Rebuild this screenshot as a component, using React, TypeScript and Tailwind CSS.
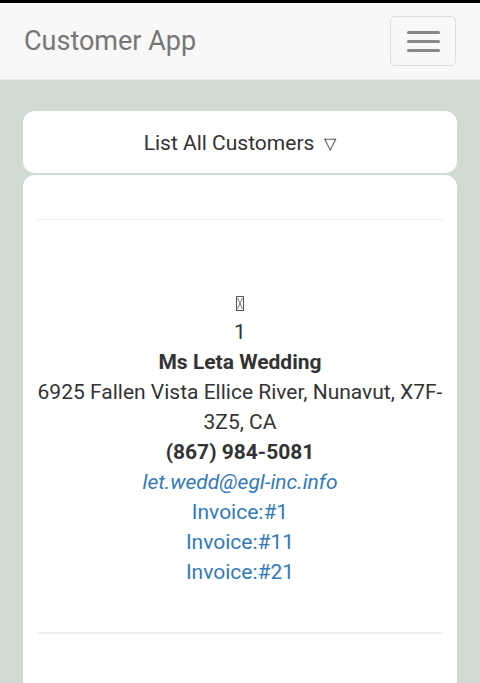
import React from "react";

const App: React.FC = () => {
  return (
    <div
      className="min-h-[683px] bg-[#d0dbd2] border-t-[3px] border-black"
      style={{ fontFamily: "Roboto, 'Liberation Sans', sans-serif" }}
    >
      {/* Navbar */}
      <nav className="h-[77px] bg-[#f8f8f8] border-b border-[#e7e7e7] flex items-center justify-between pl-[24px] pr-[24px]">
        <span className="text-[27px] text-[#777] leading-none">Customer App</span>
        <button className="w-[66px] h-[50px] border border-[#ddd] rounded-[5px] flex flex-col items-center justify-center gap-[6px]">
          <span className="block w-[33px] h-[3px] bg-[#888] rounded-sm" />
          <span className="block w-[33px] h-[3px] bg-[#888] rounded-sm" />
          <span className="block w-[33px] h-[3px] bg-[#888] rounded-sm" />
        </button>
      </nav>

      <div className="px-[23px] pt-[31px] flex flex-col gap-[2px]">
        {/* Dropdown card */}
        <div className="bg-white rounded-[12px] h-[62px] pt-[4px] flex items-center justify-center text-[21px] text-[#333]">
          List All Customers <span className="ml-[10px] text-[16px]">▽</span>
        </div>

        {/* Customer card */}
        <div className="bg-white rounded-t-[12px] px-[14px] pt-[44px] pb-[60px]">
          <hr className="border-t border-[#eee]" />
          <div className="pt-[67px] pb-[45px] text-center text-[21px] leading-[30px] text-[#333]">
            <div className="flex justify-center items-center h-[30px] pt-[2px]">
              <svg width="8" height="15" viewBox="0 0 8 15" className="text-[#555]">
                <rect x="0.5" y="0.5" width="7" height="14" fill="none" stroke="currentColor" strokeWidth="1" />
                <path d="M1.5 2 L6.5 13 M6.5 2 L1.5 13" stroke="currentColor" strokeWidth="0.8" />
              </svg>
            </div>
            <div>1</div>
            <div className="font-bold">Ms Leta Wedding</div>
            <div>6925 Fallen Vista Ellice River, Nunavut, X7F-3Z5, CA</div>
            <div className="font-bold">(867) 984-5081</div>
            <div className="italic text-[#337ab7]">let.wedd@egl-inc.info</div>
            <div className="text-[#337ab7]">Invoice:#1</div>
            <div className="text-[#337ab7]">Invoice:#11</div>
            <div className="text-[#337ab7]">Invoice:#21</div>
          </div>
          <hr className="border-t-[2px] border-[#eee]" />
        </div>
      </div>
    </div>
  );
};

export default App;
